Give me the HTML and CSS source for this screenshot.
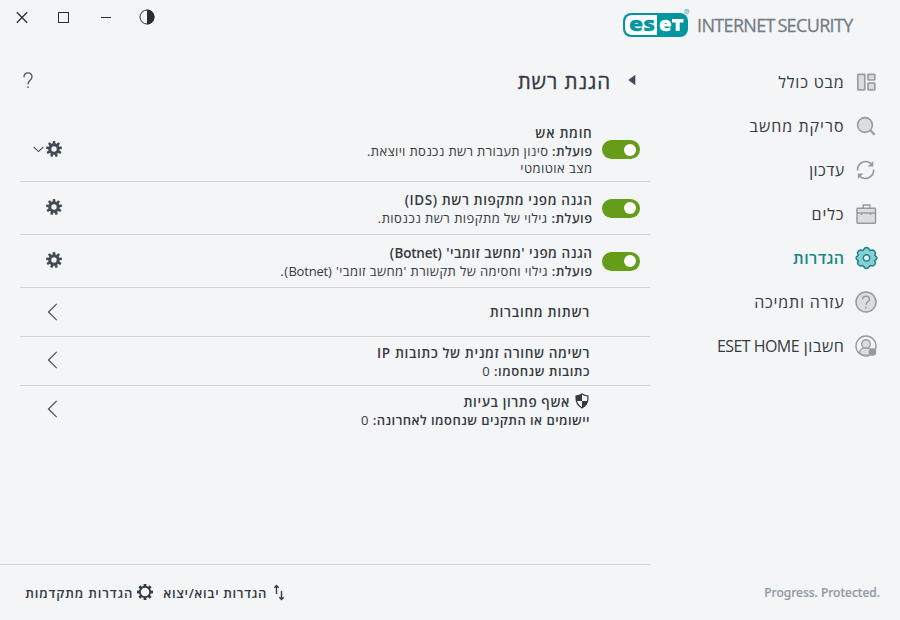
FILE: index.html
```html
<!DOCTYPE html>
<html lang="he" dir="rtl">
<head>
<meta charset="utf-8">
<title>ESET Internet Security</title>
<link rel="stylesheet" href="styles.css">
</head>
<body>
<svg class="defs" width="0" height="0" aria-hidden="true">
  <defs>
    <symbol id="cog" viewBox="-8 -8 16 16">
      <g fill="#414b54">
        <path id="tooth" d="M-1.500 -5L-1.100 -8H1.100L1.500 -5Z"/>
        <use href="#tooth" transform="rotate(40)"/><use href="#tooth" transform="rotate(80)"/><use href="#tooth" transform="rotate(120)"/><use href="#tooth" transform="rotate(160)"/><use href="#tooth" transform="rotate(200)"/><use href="#tooth" transform="rotate(240)"/><use href="#tooth" transform="rotate(280)"/><use href="#tooth" transform="rotate(320)"/>
      </g>
      <circle r="4.200" fill="none" stroke="#414b54" stroke-width="3"/>
    </symbol>
  </defs>
</svg>
<div class="window">
  <aside class="sidebar">
    <div class="brand" dir="ltr">
      <svg class="logo" width="68" height="30" viewBox="0 0 68 30">
        <rect x="0" y="5" width="65" height="24" rx="8" fill="#0096a1"/>
        <path d="M34 7H9.500Q2 7 2 14.500V19.500Q2 27 9.500 27H34Z" fill="#fff"/>
        <text class="logo-text" x="6" y="23" textLength="26" lengthAdjust="spacingAndGlyphs" fill="#0096a1" stroke="#0096a1">es</text>
        <text class="logo-text" x="36" y="23" textLength="12.500" lengthAdjust="spacingAndGlyphs" fill="#fff" stroke="#fff">e</text>
        <path d="M49 11H60.500V14.500H56.700V23H52.700V14.500H49Z" fill="#fff"/>
        <circle cx="63.800" cy="3.600" r="2.200" fill="none" stroke="#4fb3bb" stroke-width=".8"/>
        <path d="M63.200 4.800V2.500H64.300V3.600H63.200L64.500 4.800" fill="none" stroke="#4fb3bb" stroke-width=".5"/>
      </svg>
      <span class="product">INTERNET SECURITY</span>
    </div>
    <nav class="nav">
      <a class="nav-item"><svg width="24" height="24" viewBox="0 0 24 24" fill="#dcdddf" stroke="#9c9da0" stroke-width="1.700"><rect x="3.800" y="4.300" width="7" height="15.500" rx=".5"/><rect x="14" y="4.300" width="6.800" height="5.700" rx=".5"/><rect x="14" y="13.200" width="6.800" height="6.600" rx=".5"/></svg><span class="n1">מבט כולל</span></a>
      <a class="nav-item"><svg width="24" height="24" viewBox="0 0 24 24" fill="#dcdddf" stroke="#98999c"><circle cx="11" cy="11" r="7.400" stroke-width="1.600"/><path d="M16.500 16.500L20.700 20.700" stroke-width="2.200"/></svg><span class="n2">סריקת מחשב</span></a>
      <a class="nav-item"><svg width="24" height="24" viewBox="0 0 24 24" fill="none" stroke="#98999c" stroke-width="1.700"><path d="M3.600 12.500A8.300 8.300 0 0 1 17 5.400M19.600 11.500A8.300 8.300 0 0 1 6.200 18.600"/><path d="M19.300 3V8.500H13.800ZM3.900 21V15.500H9.400Z" fill="#98999c" stroke="none"/></svg><span class="n3">עדכון</span></a>
      <a class="nav-item"><svg width="24" height="24" viewBox="0 0 24 24" fill="#dcdddf" stroke="#98999c" stroke-width="1.500"><path d="M9.200 6V3H15.800V6" fill="none"/><rect x="3" y="6.300" width="18.500" height="15" rx=".7"/><path d="M3 11H21.500M7.500 10.500V13M16.500 10.500V13"/></svg><span class="n4">כלים</span></a>
      <a class="nav-item active"><svg width="24" height="24" viewBox="-12.500 -12 24 24" fill="#8bcdd5" stroke="#17868b" stroke-width="1.500" stroke-linejoin="round"><path d="M-1.800 -9.800Q0 -11 1.800 -9.800L3.400 -7.600L6.200 -8.100Q8.500 -7.500 9 -5.200L8.200 -2.800L10 -1.200Q10.800 0 10 1.200L8.200 2.800L9 5.200Q8.500 7.500 6.200 8.100L3.400 7.600L1.800 9.800Q0 11 -1.800 9.800L-3.400 7.600L-6.200 8.100Q-8.500 7.500 -9 5.200L-8.200 2.800L-10 1.200Q-10.800 0 -10 -1.200L-8.200 -2.800L-9 -5.200Q-8.500 -7.500 -6.200 -8.100L-3.400 -7.600Z"/><circle r="3.200" fill="#e9f3f5"/></svg><span class="n5">הגדרות</span></a>
      <a class="nav-item"><svg width="24" height="24" viewBox="0 0 24 24" fill="#dcdddf" stroke="#98999c" stroke-width="1.500"><circle cx="12" cy="12" r="10"/><path d="M8.500 9.500C8.500 5.300 15.500 5.300 15.500 9.500C15.500 12 12 11.500 12 14.800M12 16.800V18.500" fill="none"/></svg><span class="n6">עזרה ותמיכה</span></a>
      <a class="nav-item"><svg width="24" height="24" viewBox="0 0 24 24" fill="#dcdddf" stroke="#98999c" stroke-width="1.400"><circle cx="12" cy="12" r="10" fill="none"/><path d="M5.500 19Q6 14.500 9.500 14H14Q17.500 14.500 18 17L15.500 21H8.500Z" stroke-width="1.200"/><circle cx="12" cy="10" r="4.300"/><circle cx="18.500" cy="18" r="3.800" fill="#98999c" stroke="none"/></svg><span class="n7">חשבון <span class="latin">ESET HOME</span></span></a>
    </nav>
    <div class="tagline" dir="ltr">Progress. Protected.</div>
  </aside>

  <main class="main">
    <div class="controls" dir="rtl">
      <svg class="contrast" width="16" height="16" viewBox="0 0 16 16"><circle cx="8" cy="8" r="7" fill="none" stroke="#2b2d30"/><path d="M8 .5A7.500 7.500 0 0 1 8 15.500Z" fill="#2b2d30"/></svg>
      <svg width="12" height="12" viewBox="0 0 12 12" fill="none" stroke="#2b2d30"><path d="M1 6.500H11"/></svg>
      <svg width="12" height="12" viewBox="0 0 12 12" fill="none" stroke="#2b2d30"><rect x=".5" y="1.500" width="10" height="10"/></svg>
      <svg width="12" height="12" viewBox="0 0 12 12" fill="none" stroke="#2b2d30" stroke-width="1.300"><path d="M.8 1.300L11.200 11.700M11.200 1.300L.8 11.700"/></svg>
    </div>
    <header class="page-head">
      <svg width="8" height="12" viewBox="0 0 8 12"><path d="M7.300 .8V11.200L.3 6Z" fill="#414b54"/></svg>
      <h1>הגנת רשת</h1>
      <svg class="help" width="10" height="17" viewBox="0 0 10 17" fill="none" stroke="#4b555e" stroke-width="1.300"><path d="M1 5.200C1 -.5 9 -.5 9 4.800C9 8.500 5 8 5 12.200M5 14.200V16"/></svg>
    </header>
    <section class="rows">
      <div class="row r1">
        <span class="toggle"></span>
        <div class="text"><b class="t1">חומת אש</b><p class="s1"><b>פועלת:</b> סינון תעבורת רשת נכנסת ויוצאת.</p><p class="s1b">מצב אוטומטי</p></div>
        <div class="act"><svg class="cog" width="16" height="16"><use href="#cog"/></svg><svg width="11" height="7" viewBox="0 0 11 7" fill="none" stroke="#4b555e" stroke-width="1.100"><path d="M.7 2L5.500 6.600L10.300 2"/></svg></div>
      </div>
      <div class="row r2">
        <span class="toggle"></span>
        <div class="text"><b class="t2">הגנה מפני מתקפות רשת (IDS)</b><p class="s2"><b>פועלת:</b> גילוי של מתקפות רשת נכנסות.</p></div>
        <div class="act"><svg class="cog" width="16" height="16"><use href="#cog"/></svg></div>
      </div>
      <div class="row r3">
        <span class="toggle"></span>
        <div class="text"><b class="t3">הגנה מפני 'מחשב זומבי' (<span class="latin">Botnet</span>)</b><p class="s3"><b>פועלת:</b> גילוי וחסימה של תקשורת 'מחשב זומבי' (<span class="latin">Botnet</span>).</p></div>
        <div class="act"><svg class="cog" width="16" height="16"><use href="#cog"/></svg></div>
      </div>
      <div class="row link r4">
        <div class="text"><b class="t4">רשתות מחוברות</b></div>
        <div class="act"><svg class="chev" width="10" height="18" viewBox="0 0 10 18" fill="none" stroke="#414b54" stroke-width="1.200"><path d="M9.700 .8L1.500 9L9.700 17.200"/></svg></div>
      </div>
      <div class="row link r5">
        <div class="text"><b class="t5">רשימה שחורה זמנית של כתובות IP</b><p class="s5"><b>כתובות שנחסמו:</b> 0</p></div>
        <div class="act"><svg class="chev" width="10" height="18" viewBox="0 0 10 18" fill="none" stroke="#414b54" stroke-width="1.200"><path d="M9.700 .8L1.500 9L9.700 17.200"/></svg></div>
      </div>
      <div class="row link r6">
        <div class="text"><div class="shielded"><svg width="14" height="16" viewBox="0 0 14 16"><path d="M7 1Q9.500 2.800 13 3Q13.500 11.500 7 15Q.5 11.500 1 3Q4.500 2.800 7 1Z" fill="#f4f5f7" stroke="#343a41" stroke-width="1.200"/><path d="M7 1V8H1.200Q.8 5 1 3Q4.500 2.800 7 1ZM7 8H12.700Q12 12.500 7 15Z" fill="#343a41"/></svg><b class="t6">אשף פתרון בעיות</b></div><p class="s6"><b>יישומים או התקנים שנחסמו לאחרונה:</b> 0</p></div>
        <div class="act"><svg class="chev" width="10" height="18" viewBox="0 0 10 18" fill="none" stroke="#414b54" stroke-width="1.200"><path d="M9.700 .8L1.500 9L9.700 17.200"/></svg></div>
      </div>
    </section>
    <footer class="foot">
      <a class="foot-item io"><svg width="12" height="16" viewBox="0 0 12 16" fill="none" stroke="#343a41" stroke-width="1.400"><path d="M3.500 9V1M1.300 2.800L3.500 .6L5.700 2.800M8.500 6V14.300M6.300 12.200L8.500 14.500L10.700 12.200"/></svg><b class="f1">הגדרות יבוא/יצוא</b></a>
      <a class="foot-item adv"><svg width="16" height="16" viewBox="-8 -7 16 16"><g fill="#343a41"><rect x="-1.400" y="-8" width="2.800" height="16"/><rect x="-1.400" y="-8" width="2.800" height="16" transform="rotate(45)"/><rect x="-1.400" y="-8" width="2.800" height="16" transform="rotate(90)"/><rect x="-1.400" y="-8" width="2.800" height="16" transform="rotate(135)"/></g><circle r="5.200" fill="#f4f5f7" stroke="#343a41" stroke-width="1.900"/></svg><b class="f2">הגדרות מתקדמות</b></a>
    </footer>
  </main>
</div>
</body>
</html>
```
FILE: styles.css
```css
* { box-sizing: border-box; }
body { margin: 0; background: #f4f5f7; color: #343a41; font-family: "Open Sans", "Noto Sans", "DejaVu Sans", sans-serif; }
p, h1 { margin: 0; }
b { font-weight: 600; }
svg { display: block; flex: none; overflow: visible; }
.defs { position: absolute; }
.window { display: grid; grid-template-columns: 250px 650px; width: 900px; height: 620px; overflow: hidden; }

.sidebar { display: flex; flex-direction: column; padding: 8px 20px 0 0; }
.brand { display: flex; align-self: flex-end; width: 257px; margin-left: -27px; height: 32px; gap: 6px; flex: none; }
.logo-text { font: 800 20px "Open Sans", sans-serif; stroke-width: .3px; }
.product { font-size: 18px; font-weight: 500; line-height: 34px; color: #747d84; white-space: nowrap; letter-spacing: -.65px; word-spacing: -1.500px; -webkit-text-stroke: .3px #747d84; }
.nav { display: flex; flex-direction: column; margin-top: 20px; }
.nav-item { display: flex; align-items: center; gap: 9.500px; height: 44px; padding-right: 2px; font-size: 16px; white-space: nowrap; }
.active { color: #17868b; font-weight: 600; }
.n1 { letter-spacing: .82px; }
.n2 { letter-spacing: 1px; }
.n3 { letter-spacing: .4px; }
.n4 { letter-spacing: .9px; }
.n5 { letter-spacing: .4px; }
.n6 { letter-spacing: .78px; }
.n7 { letter-spacing: .6px; }
.n7 .latin { letter-spacing: -.55px; }
.tagline { margin: auto 0 18px; font: 500 12px/18px "Noto Sans", sans-serif; color: #939ba2; text-align: right; -webkit-text-stroke: .2px #939ba2; }

.main { display: flex; flex-direction: column; }
.controls { display: flex; justify-content: flex-end; gap: 30px; align-items: center; height: 34px; padding-left: 16px; }
.contrast { margin-left: -3px; }
.page-head { display: flex; align-items: center; height: 40px; margin-top: 26px; padding: 0 14px 0 23px; }
h1 { margin: 2px 17px 0 0; font-size: 20.500px; font-weight: 500; line-height: 28px; letter-spacing: .9px; -webkit-text-stroke: .35px #343a41; }
.help { margin-right: auto; }
.rows { margin: 16px 0 0 20px; }
.row { display: flex; align-items: center; height: 53px; padding-right: 10px; border-bottom: 1px solid #d1d4d7; }
.r1 { height: 66px; padding-top: 2px; }
.r4, .r5 { height: 49px; }
.r6 { height: 50px; border: 0; }
.link { padding-right: 60px; }
.toggle { width: 38px; height: 19px; border-radius: 10px; background: #659c19; display: flex; align-items: center; padding-right: 4px; flex: none; }
.toggle::before { content: ""; width: 12px; height: 12px; border-radius: 50%; background: #fff; }
.text { margin-right: 9.500px; padding-top: 2px; font-size: 13px; line-height: 18px; white-space: nowrap; }
.link .text { margin-right: 0; }
.r4 .text, .r6 .text { padding-top: 0; }
.text > b { display: block; font-size: 13.500px; }
.t1 { letter-spacing: .7px; }
.s1 { letter-spacing: .34px; }
.s1b { letter-spacing: .45px; line-height: 17px; }
.t2 { letter-spacing: .58px; }
.s2 { letter-spacing: .45px; }
.t3 { letter-spacing: .5px; }
.s3 { letter-spacing: .4px; }
.t3 .latin, .s3 .latin { letter-spacing: -.2px; }
.t4 { letter-spacing: .72px; }
.t5 { letter-spacing: .62px; }
.s5 { letter-spacing: .5px; }
.t6 { letter-spacing: .6px; }
.s6 { letter-spacing: .44px; }
.shielded { display: flex; gap: 5px; font-size: 13.500px; }
.shielded svg { margin-right: 1px; }
.act { margin: 0 auto 2px 0; width: 44px; display: flex; gap: 2px; align-items: center; padding-right: 2px; }
.r4 .act { margin-bottom: 0; }
.r6 .act { margin-bottom: 4px; }
.chev { margin-right: 5px; }
.foot { display: flex; gap: 10px; height: 56px; margin-top: auto; padding-right: 365px; border-top: 1px solid #d1d4d7; align-items: center; font-size: 13px; white-space: nowrap; }
.foot-item { display: flex; align-items: center; gap: 6px; }
.adv { gap: 4px; }
.f1 { letter-spacing: .65px; }
.f2 { letter-spacing: .85px; }
```
